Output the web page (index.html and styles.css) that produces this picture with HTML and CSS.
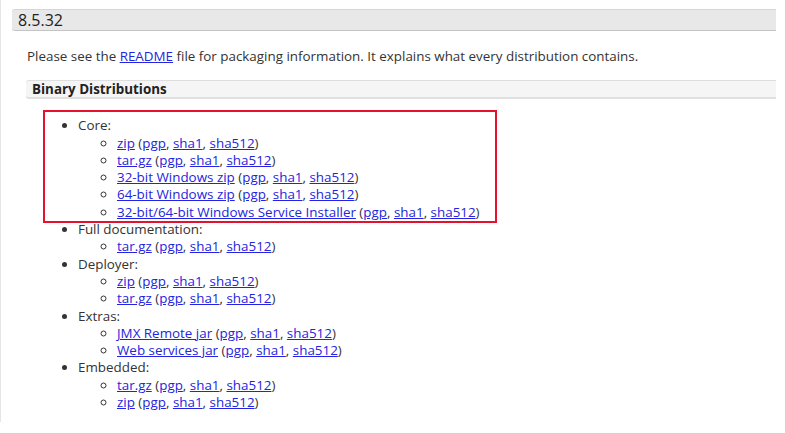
FILE: index.html
```html
<!DOCTYPE html>
<html lang="en">
<head>
<meta charset="UTF-8">
<meta name="viewport" content="width=device-width, initial-scale=1.0">
<title>Tomcat 8.5.32 Downloads</title>
<link rel="stylesheet" href="styles.css">
</head>
<body>
  <div class="page">
    <h3 class="version">8.5.32</h3>
    <div class="section">
      <p>Please see the <a href="#">README</a> file for packaging information. It explains what every distribution contains.</p>
      <h4 class="subhead">Binary Distributions</h4>
      <div class="downloads">
        <ul class="dist-list">
          <li>Core:
            <ul>
              <li><a href="#">zip</a> (<a href="#">pgp</a>, <a href="#">sha1</a>, <a href="#">sha512</a>)</li>
              <li><a href="#">tar.gz</a> (<a href="#">pgp</a>, <a href="#">sha1</a>, <a href="#">sha512</a>)</li>
              <li><a href="#">32-bit Windows zip</a> (<a href="#">pgp</a>, <a href="#">sha1</a>, <a href="#">sha512</a>)</li>
              <li><a href="#">64-bit Windows zip</a> (<a href="#">pgp</a>, <a href="#">sha1</a>, <a href="#">sha512</a>)</li>
              <li><a href="#">32-bit/64-bit Windows Service Installer</a> (<a href="#">pgp</a>, <a href="#">sha1</a>, <a href="#">sha512</a>)</li>
            </ul>
          </li>
          <li>Full documentation:
            <ul>
              <li><a href="#">tar.gz</a> (<a href="#">pgp</a>, <a href="#">sha1</a>, <a href="#">sha512</a>)</li>
            </ul>
          </li>
          <li>Deployer:
            <ul>
              <li><a href="#">zip</a> (<a href="#">pgp</a>, <a href="#">sha1</a>, <a href="#">sha512</a>)</li>
              <li><a href="#">tar.gz</a> (<a href="#">pgp</a>, <a href="#">sha1</a>, <a href="#">sha512</a>)</li>
            </ul>
          </li>
          <li>Extras:
            <ul>
              <li><a href="#">JMX Remote jar</a> (<a href="#">pgp</a>, <a href="#">sha1</a>, <a href="#">sha512</a>)</li>
              <li><a href="#">Web services jar</a> (<a href="#">pgp</a>, <a href="#">sha1</a>, <a href="#">sha512</a>)</li>
            </ul>
          </li>
          <li>Embedded:
            <ul>
              <li><a href="#">tar.gz</a> (<a href="#">pgp</a>, <a href="#">sha1</a>, <a href="#">sha512</a>)</li>
              <li><a href="#">zip</a> (<a href="#">pgp</a>, <a href="#">sha1</a>, <a href="#">sha512</a>)</li>
            </ul>
          </li>
        </ul>
        <div class="highlight"></div>
      </div>
    </div>
  </div>
</body>
</html>
```

FILE: styles.css
```css
body {
  margin: 0;
  background-color: #fff;
  font-family: "Open Sans", "Liberation Sans", sans-serif;
  font-size: 13.4px;
  line-height: 17.3px;
  color: #333;
}
a {
  color: #2424e0;
  text-decoration: underline;
}
.page {
  border-left: 1px solid #e6e6e6;
  padding: 9px 9px 11px 11px;
}
.version {
  margin: 0;
  padding: 0 6px;
  background-color: #e8e8e8;
  border-top: 1px solid #d6d6d6;
  border-bottom: 1px solid #c4c4c4;
  border-radius: 3px 0 0 3px;
  font-size: 16px;
  font-weight: normal;
  line-height: 20px;
  color: #222;
}
.section {
  margin-left: 14px;
}
.section p {
  margin: 17px 0 15px 1px;
}
.subhead {
  margin: 0;
  padding: 0 6px;
  background-color: #f5f5f5;
  border-top: 1px solid #dedede;
  border-bottom: 2px solid #e0e0e0;
  border-radius: 3px 0 0 3px;
  font-size: 13.4px;
  line-height: 16px;
  color: #222;
}
.downloads {
  position: relative;
}
.dist-list {
  margin: 18px 0 0;
  padding-left: 52px;
}
.dist-list ul {
  margin: 0;
  padding-left: 39px;
}
.highlight {
  position: absolute;
  left: 17px;
  top: -7px;
  width: 450px;
  height: 109px;
  border: 2px solid #e4112f;
}
```
